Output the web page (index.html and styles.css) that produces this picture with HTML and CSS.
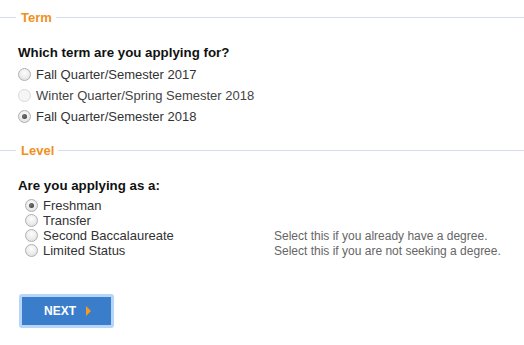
FILE: index.html
```html
<!DOCTYPE html>
<html>
<head>
<meta charset="utf-8">
<link rel="stylesheet" href="styles.css">
</head>
<body>
<form class="app-form">
  <fieldset class="section">
    <legend class="section-title">Term</legend>
    <div class="question">Which term are you applying for?</div>
    <div class="options options-term">
      <label class="opt"><input type="radio" name="term" class="radio"><span>Fall Quarter/Semester 2017</span></label>
      <label class="opt"><input type="radio" name="term" class="radio" disabled><span>Winter Quarter/Spring Semester 2018</span></label>
      <label class="opt"><input type="radio" name="term" class="radio" checked><span>Fall Quarter/Semester 2018</span></label>
    </div>
  </fieldset>
  <fieldset class="section section-level">
    <legend class="section-title">Level</legend>
    <div class="question question-level">Are you applying as a:</div>
    <div class="options options-level">
      <div class="level-row"><label class="opt"><input type="radio" name="level" class="radio" checked><span>Freshman</span></label></div>
      <div class="level-row"><label class="opt"><input type="radio" name="level" class="radio"><span>Transfer</span></label></div>
      <div class="level-row"><label class="opt"><input type="radio" name="level" class="radio"><span>Second Baccalaureate</span></label><span class="hint">Select this if you already have a degree.</span></div>
      <div class="level-row"><label class="opt"><input type="radio" name="level" class="radio"><span>Limited Status</span></label><span class="hint">Select this if you are not seeking a degree.</span></div>
    </div>
  </fieldset>
  <div class="actions">
    <button type="button" class="btn-next">NEXT<span class="arrow"></span></button>
  </div>
</form>
</body>
</html>
```
FILE: styles.css
```css
html, body {
  margin: 0;
  padding: 0;
  background: #fff;
}
body {
  font-family: "Liberation Sans", Arial, sans-serif;
  color: #333;
  width: 524px;
  height: 345px;
  overflow: hidden;
}
.section {
  margin: 10px 0 0 0;
  padding: 0;
  border: 0;
  border-top: 1px solid #d5dde9;
  min-width: 0;
}
.section-level {
  margin-top: 16px;
}
.section-title {
  margin-left: 16px;
  padding: 0 4px 0 5px;
  font-size: 13px;
  line-height: 15px;
  font-weight: bold;
  color: #f0901d;
}
.question {
  margin: 19px 0 0 18px;
  font-size: 13.3px;
  line-height: 18px;
  font-weight: bold;
  color: #111;
}
.question-level {
  margin-top: 19px;
}
.options-term {
  margin-top: 2px;
  display: flex;
  flex-direction: column;
}
.options-term .opt {
  height: 21px;
  padding-left: 18px;
}
.opt {
  display: flex;
  align-items: center;
  font-size: 13px;
  color: #333;
}
.radio {
  -webkit-appearance: none;
  appearance: none;
  width: 13px;
  height: 13px;
  margin: 0 5px 0 0;
  border-radius: 50%;
  border: 1px solid #b0b0b0;
  background: radial-gradient(circle at 50% 35%, #fdfdfd 0%, #eaeaea 60%, #d8d8d8 100%);
  box-sizing: border-box;
  flex: none;
  position: relative;
}
.radio:checked::after {
  content: "";
  position: absolute;
  left: 3px;
  top: 3px;
  width: 5px;
  height: 5px;
  border-radius: 50%;
  background: radial-gradient(circle at 40% 40%, #777 0%, #333 100%);
}
.radio:disabled {
  border-color: #d9d9d9;
  background: #f5f5f5;
}
.opt:has(.radio:disabled) {
  color: #444;
}
.options-level {
  margin-top: 3px;
  padding-left: 25px;
  display: flex;
  flex-direction: column;
}
.level-row {
  display: flex;
  align-items: center;
  height: 15px;
}
.level-row .opt {
  width: 249px;
}
.hint {
  font-size: 12px;
  color: #666;
}
.actions {
  margin: 36px 0 0 19px;
}
.btn-next {
  display: flex;
  align-items: center;
  justify-content: center;
  gap: 10px;
  width: 95px;
  height: 34px;
  box-sizing: border-box;
  border: 3px solid #b5d6f9;
  border-radius: 3px;
  background: #3a7ecb;
  background-clip: padding-box;
  color: #fff;
  font-family: "Liberation Sans", Arial, sans-serif;
  font-size: 12px;
  font-weight: bold;
  padding: 0 0 0 2px;
  cursor: pointer;
}
.arrow {
  width: 0;
  height: 0;
  border-top: 5px solid transparent;
  border-bottom: 5px solid transparent;
  border-left: 5px solid #f59a1b;
  margin-left: 0;
}
```
